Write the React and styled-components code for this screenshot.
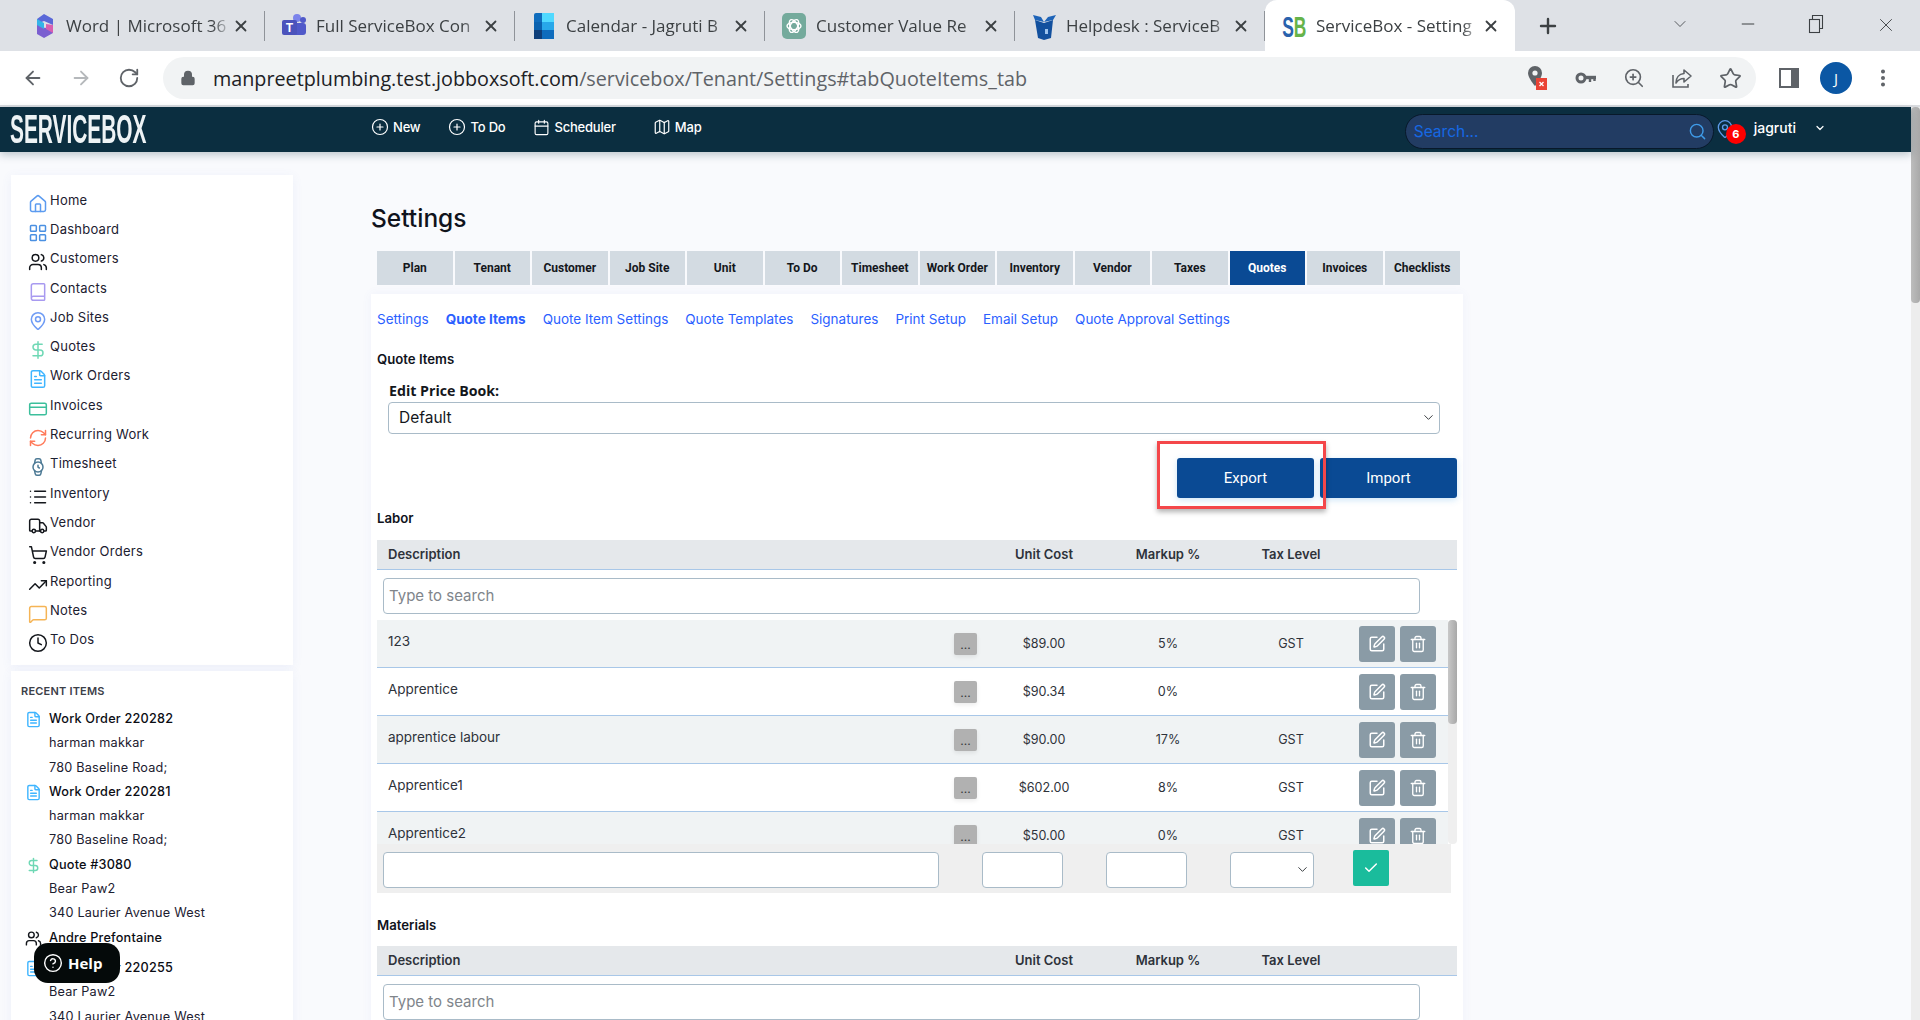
import React from 'react';
import styled, { createGlobalStyle } from 'styled-components';
import {
  ArrowLeft, ArrowRight, RotateCw, Lock, ZoomIn, Star, Plus, X, ChevronDown, Minus,
  CirclePlus, Calendar, Map as MapIcon, Search, MapPin, House, LayoutGrid, Users, Book, DollarSign,
  FileText, CreditCard, RefreshCw, Watch, List, Truck, ShoppingCart, TrendingUp, MessageSquare,
  Clock, SquarePen, Trash2, Check, CircleHelp, EllipsisVertical,
} from 'lucide-react';

const GlobalStyle = createGlobalStyle`
  html, body {
    margin: 0;
    padding: 0;
    overflow: hidden;
    background: #f9fafd;
  }
  * { box-sizing: border-box; }
`;

const APP_FONT = `Inter, 'Open Sans', sans-serif`;
const CHROME_FONT = `'Open Sans', 'Noto Sans', sans-serif`;
const TABLE_COLUMNS = '577px 23px 134px 114px 132px 1fr';

const Frame = styled.div`
  width: 1920px;
  height: 1020px;
  display: flex;
  flex-direction: column;
  overflow: hidden;
`;

/* browser chrome */
const TabStrip = styled.div`
  height: 51px;
  background: #dee1e6;
  display: flex;
  padding-left: 15px;
  font-family: ${CHROME_FONT};
`;

const BrowserTab = styled.div`
  width: 250px;
  height: 51px;
  display: flex;
  align-items: center;
  padding: 0 15px 0 16px;
  position: relative;
  color: #3c4043;
  background: ${(p) => (p.$active ? '#fff' : 'transparent')};
  border-radius: ${(p) => (p.$active ? '12px 12px 0 0' : '0')};
  &::after {
    content: '';
    display: ${(p) => (p.$sep ? 'block' : 'none')};
    position: absolute;
    right: 0;
    top: 11px;
    bottom: 10px;
    width: 1px;
    background: #8f9399;
  }
`;

const Favicon = styled.span`
  width: 26px;
  height: 26px;
  display: flex;
  align-items: center;
  justify-content: center;
  flex: none;
`;

const TabTitle = styled.span`
  flex: 1;
  margin-left: 9px;
  font-size: 17px;
  white-space: nowrap;
  overflow: hidden;
  -webkit-mask-image: linear-gradient(90deg, #000 88%, transparent 100%);
  mask-image: linear-gradient(90deg, #000 88%, transparent 100%);
`;

const WindowControls = styled.div`
  flex: 1;
  display: flex;
  align-items: center;
  color: #3c4043;
`;

const NewTabSlot = styled.span`
  margin-left: 21px;
  display: flex;
`;

const WindowButton = styled.span`
  display: flex;
  position: absolute;
  left: ${(p) => p.$x}px;
  top: 14px;
`;

const Toolbar = styled.div`
  height: 56px;
  background: #fff;
  border-bottom: 2px solid #dadce0;
  display: flex;
  align-items: center;
  padding-left: 22px;
  color: #5f6368;
  font-family: ${CHROME_FONT};
`;

const NavIcons = styled.div`
  display: flex;
  gap: 26px;
  width: 141px;
  flex: none;
`;

const Omnibox = styled.div`
  width: 1593px;
  height: 42px;
  border-radius: 21px;
  background: #f1f3f4;
  display: flex;
  align-items: center;
  padding-left: 17px;
`;

const UrlText = styled.div`
  margin-left: 17px;
  font-size: 19.75px;
  color: #5f6368;
  white-space: nowrap;
  flex: 1;
  b { font-weight: 400; color: #202124; }
`;

const OmniIcons = styled.div`
  display: flex;
  align-items: center;
  gap: 25px;
  padding-right: 14px;
`;

const ToolbarEnd = styled.div`
  display: flex;
  align-items: center;
  margin-left: 22px;
  gap: 20px;
`;

const Avatar = styled.div`
  width: 32px;
  height: 32px;
  border-radius: 50%;
  background: #0b57a4;
  color: #fff;
  font-size: 15px;
  display: flex;
  align-items: center;
  justify-content: center;
`;

/* page */
const PageArea = styled.div`
  flex: 1;
  display: flex;
  min-height: 0;
`;

const PageColumn = styled.div`
  flex: 1;
  min-width: 0;
  display: flex;
  flex-direction: column;
  background: #f9fafd;
  font-family: ${APP_FONT};
`;

const PageScrollbar = styled.div`
  width: 9px;
  background: #ededed;
  flex: none;
`;

const ScrollThumb = styled.div`
  height: ${(p) => p.$h}px;
  background: linear-gradient(90deg, #bdbdbd, #a9a9a9);
  border-radius: 4px;
`;

const AppHeader = styled.header`
  height: 45px;
  flex: none;
  background: #0b2e40;
  display: flex;
  align-items: center;
  color: #fff;
  box-shadow: 0 3px 8px rgba(11, 46, 64, 0.25);
  position: relative;
  z-index: 2;
  padding-right: 85px;
`;

const LogoBox = styled.div`
  width: 372px;
  padding-left: 10px;
  flex: none;
`;

const Logo = styled.div`
  display: inline-block;
  font-family: 'Liberation Sans', sans-serif;
  font-weight: 700;
  font-size: 40px;
  line-height: 45px;
  white-space: nowrap;
  color: #eef3f5;
  transform: scaleX(0.522);
  transform-origin: left center;
`;

const HeaderNav = styled.nav`
  display: flex;
  align-items: center;
  gap: 28px;
  margin-left: -1px;
`;

const HeaderLink = styled.a`
  display: flex;
  align-items: center;
  gap: 4px;
  font-size: 13px;
  font-weight: 500;
  letter-spacing: -0.2px;
  margin-left: ${(p) => p.$shift || 0}px;
  margin-top: -5px;
`;

const HeaderRight = styled.div`
  margin-left: auto;
  display: flex;
  align-items: center;
`;

const SearchPill = styled.div`
  width: 309px;
  height: 35px;
  margin-top: 3px;
  border-radius: 18px;
  border: 1px solid #08192a;
  background: #223c63;
  display: flex;
  align-items: center;
  justify-content: space-between;
  padding: 0 6px 0 8px;
  font-size: 15.5px;
  color: #1668e3;
`;

const PinBadge = styled.div`
  position: relative;
  width: 39px;
  height: 30px;
  margin-left: 1px;
  margin-top: -6px;
  color: #5d9be8;
  padding-top: 7px;
`;

const Badge = styled.span`
  position: absolute;
  left: 11px;
  top: 12px;
  width: 20px;
  height: 20px;
  border-radius: 50%;
  background: #f00;
  color: #fff;
  font-size: 11px;
  font-weight: 700;
  display: flex;
  align-items: center;
  justify-content: center;
`;

const UserName = styled.span`
  font-size: 14px;
  font-weight: 500;
  margin-right: 18px;
  margin-top: -5px;
`;

const Body = styled.div`
  flex: 1;
  min-height: 0;
  display: flex;
  align-items: flex-start;
  position: relative;
`;

const Sidebar = styled.aside`
  width: 293px;
  flex: none;
  padding: 23px 0 0 11px;
  display: flex;
  flex-direction: column;
  gap: 6px;
`;

const SideCard = styled.div`
  width: 282px;
  background: #fff;
  box-shadow: 0 2px 10px rgba(90, 110, 200, 0.08);
`;

const NavList = styled(SideCard)`
  height: 490px;
  padding-top: 10px;
`;

const NavRow = styled.div`
  height: 29.3px;
  display: flex;
  align-items: center;
  padding-left: 17px;
  gap: 2px;
  font-size: 13px;
  letter-spacing: 0.25px;
  color: #1c2030;
`;

const NavIconBox = styled.span`
  width: 20px;
  height: 20px;
  margin-top: 8px;
  display: flex;
  justify-content: center;
  color: ${(p) => p.$color};
`;

const RecentCard = styled(SideCard)`
  padding: 12px 0 0 10px;
  height: 360px;
`;

const RecentHeading = styled.div`
  font-size: 11px;
  font-weight: 600;
  color: #3c4048;
  letter-spacing: 0.2px;
  line-height: 16px;
  margin-bottom: 8px;
`;

const RecentItem = styled.div`
  display: grid;
  grid-template-columns: 28px 1fr;
  margin-bottom: ${(p) => (p.$solo ? 6 : 0)}px;
  font-size: 12.7px;
  line-height: 24.3px;
  color: #1c2030;
  letter-spacing: 0.2px;
`;

const RecentIcon = styled.span`
  color: ${(p) => p.$color};
  display: flex;
  justify-content: center;
  padding: 4px 4px 0 0;
  height: 24px;
`;

const RecentTitle = styled.div`
  font-weight: 500;
  color: #0b0d14;
`;

const HelpButton = styled.button`
  position: absolute;
  left: 34px;
  top: 791px;
  width: 86px;
  height: 40px;
  border: none;
  border-radius: 14px;
  background: #050a0a;
  color: #fff;
  font-family: 'Open Sans', sans-serif;
  font-size: 15px;
  font-weight: 700;
  display: flex;
  align-items: center;
  padding-left: 9px;
  gap: 5px;
  z-index: 3;
`;

const Main = styled.main`
  width: 1092px;
  margin-left: 78px;
`;

const PageTitle = styled.h1`
  margin: 0;
  height: 99px;
  padding-top: 50px;
  font-size: 24.5px;
  line-height: 32px;
  font-weight: 500;
  color: #10131c;
`;

const TabsBar = styled.div`
  display: grid;
  grid-template-columns: repeat(14, 1fr);
  gap: 2px;
  margin-left: 6px;
  width: 1083px;
`;

const SettingsTab = styled.div`
  height: 34px;
  display: flex;
  align-items: center;
  justify-content: center;
  font-family: Roboto, sans-serif;
  font-size: 12px;
  font-weight: 700;
  white-space: nowrap;
  background: ${(p) => (p.$active ? '#0a4a94' : '#d3dbe2')};
  color: ${(p) => (p.$active ? '#fff' : '#14171c')};
`;

const ContentCard = styled.section`
  margin-top: 9px;
  background: #fff;
  padding: 0 6px;
  height: 740px;
  box-shadow: 0 0 10px rgba(90, 110, 200, 0.06);
`;

const SubNav = styled.div`
  height: 50px;
  display: flex;
  align-items: center;
  gap: 17px;
  font-size: 13.5px;
  color: #2b5fff;
`;

const SubLink = styled.a`
  font-weight: ${(p) => (p.$active ? 700 : 400)};
  white-space: nowrap;
`;

const SectionTitle = styled.div`
  font-size: 13.2px;
  font-weight: 600;
  line-height: 18px;
  color: #10131c;
  margin-top: ${(p) => p.$top}px;
`;

const FieldLabel = styled.div`
  margin: 14px 0 2px 12px;
  font-family: 'Open Sans', sans-serif;
  font-size: 14.2px;
  font-weight: 700;
  line-height: 18px;
  color: #14171c;
`;

const SelectBox = styled.div`
  width: ${(p) => p.$w}px;
  height: ${(p) => p.$h}px;
  margin-left: ${(p) => p.$left || 0}px;
  background: #fff;
  border: 1px solid #a9bbc8;
  border-radius: 4px;
  display: flex;
  align-items: center;
  justify-content: space-between;
  padding: 0 3px 2px 10px;
  font-size: 15.5px;
  color: #14171c;
  flex: none;
`;

const ButtonRow = styled.div`
  margin-top: 24px;
  display: flex;
  justify-content: flex-end;
  gap: 6px;
  position: relative;
`;

const PrimaryButton = styled.button`
  width: 137px;
  height: 40px;
  border: none;
  border-radius: 3px;
  background: #0a4a94;
  color: #fff;
  font-family: Roboto, sans-serif;
  font-size: 15px;
  font-weight: 400;
  box-shadow: 0 2px 6px rgba(90, 170, 230, 0.3);
`;

const Highlight = styled.div`
  position: absolute;
  right: 131px;
  top: -17px;
  width: 169px;
  height: 68px;
  border: 3px solid #f4474a;
  box-shadow: 0 3px 5px rgba(0, 0, 0, 0.3);
  pointer-events: none;
`;

const TableHead = styled.div`
  margin-top: ${(p) => p.$top}px;
  height: 30px;
  padding-bottom: 2px;
  background: #e5e8eb;
  border-bottom: 1px solid #a8c7e8;
  display: grid;
  grid-template-columns: ${TABLE_COLUMNS};
  align-items: center;
  font-size: 13px;
  font-weight: 600;
  color: #2e323a;
`;

const HeadCell = styled.div`
  text-align: ${(p) => (p.$left ? 'left' : 'center')};
  padding-left: ${(p) => (p.$left ? 11 : 0)}px;
`;

const TextField = styled.input`
  display: block;
  width: ${(p) => p.$w}px;
  height: 36px;
  flex: none;
  background: #fff;
  border: 1px solid #a9bbc8;
  border-radius: 4px;
  padding: 0 5px 2px;
  font-family: ${APP_FONT};
  font-size: 15px;
  outline: none;
  &::placeholder { color: #80858b; opacity: 1; }
`;

const SearchField = styled(TextField)`
  margin: 8px 0 6px 6px;
`;

const RowsViewport = styled.div`
  height: 224px;
  display: flex;
  overflow: hidden;
`;

const RowsList = styled.div`
  flex: 1;
  min-width: 0;
`;

const ItemRow = styled.div`
  height: 48px;
  display: grid;
  grid-template-columns: ${TABLE_COLUMNS};
  align-items: center;
  background: ${(p) => (p.$odd ? '#f0f3f4' : '#fff')};
  border-bottom: 1px solid #a8c7e8;
  font-size: 12.6px;
  color: #2e323a;
  text-align: center;
`;

const ItemName = styled.div`
  text-align: left;
  font-size: 13.5px;
  padding: 0 0 6px 11px;
`;

const MoreButton = styled.span`
  width: 23px;
  height: 22px;
  border-radius: 2px;
  background: #b1b1b1;
  color: #33373c;
  font-size: 12px;
  line-height: 24px;
  box-shadow: 0 2px 4px rgba(0, 0, 0, 0.08);
`;

const RowActions = styled.div`
  display: flex;
  gap: 5px;
  padding-left: 2px;
`;

const ActionButton = styled.span`
  width: 36px;
  height: 36px;
  border-radius: 3px;
  background: #8a9ba6;
  color: #fff;
  display: flex;
  align-items: center;
  justify-content: center;
`;

const RowsScrollbar = styled.div`
  width: 9px;
  flex: none;
  background: #efefef;
  border-radius: 4px;
`;

const RowsThumb = styled.div`
  height: 104px;
  background: linear-gradient(90deg, #c8c8c8, #a8a8a8);
  border-radius: 4px;
`;

const AddRow = styled.div`
  width: 1074px;
  height: 49px;
  background: #efefef;
  padding: 8px 0 0 6px;
  display: flex;
  align-items: flex-start;
  gap: 43px;
`;

const ConfirmButton = styled.span`
  width: 36px;
  height: 36px;
  margin: -2px 0 0 -4px;
  border-radius: 2px;
  background: #1abc9c;
  color: #fff;
  display: flex;
  align-items: center;
  justify-content: center;
`;

const navItems = [
  ['Home', House, '#5b9bf0'],
  ['Dashboard', LayoutGrid, '#4a90e2'],
  ['Customers', Users, '#14171c'],
  ['Contacts', Book, '#a89af0'],
  ['Job Sites', MapPin, '#6f9cf5'],
  ['Quotes', DollarSign, '#6fd8b5'],
  ['Work Orders', FileText, '#3fb5ff'],
  ['Invoices', CreditCard, '#3cbf9c'],
  ['Recurring Work', RefreshCw, '#ff7a5a'],
  ['Timesheet', Watch, '#4d7a95'],
  ['Inventory', List, '#14171c'],
  ['Vendor', Truck, '#14171c'],
  ['Vendor Orders', ShoppingCart, '#14171c'],
  ['Reporting', TrendingUp, '#14171c'],
  ['Notes', MessageSquare, '#f5b455'],
  ['To Dos', Clock, '#14171c'],
];

const recentItems = [
  ['Work Order 220282', FileText, '#3fb5ff', ['harman makkar', '780 Baseline Road;']],
  ['Work Order 220281', FileText, '#3fb5ff', ['harman makkar', '780 Baseline Road;']],
  ['Quote #3080', DollarSign, '#6fd8b5', ['Bear Paw2', '340 Laurier Avenue West']],
  ['Andre Prefontaine', Users, '#14171c', []],
  ['Work Order 220255', FileText, '#3fb5ff', ['Bear Paw2', '340 Laurier Avenue West']],
];

const settingsTabs = ['Plan', 'Tenant', 'Customer', 'Job Site', 'Unit', 'To Do', 'Timesheet', 'Work Order', 'Inventory', 'Vendor', 'Taxes', 'Quotes', 'Invoices', 'Checklists'];
const subLinks = ['Settings', 'Quote Items', 'Quote Item Settings', 'Quote Templates', 'Signatures', 'Print Setup', 'Email Setup', 'Quote Approval Settings'];

const laborRows = [
  ['123', '$89.00', '5%', 'GST'],
  ['Apprentice', '$90.34', '0%', ''],
  ['apprentice labour', '$90.00', '17%', 'GST'],
  ['Apprentice1', '$602.00', '8%', 'GST'],
  ['Apprentice2', '$50.00', '0%', 'GST'],
];

const WordIcon = () => (
  <svg width="24" height="26" viewBox="0 0 24 26">
    <path d="M12 1 21 6v6l-9-4-7 3V6z" fill="#5a68d8" />
    <path d="M5 11l8 4 8-3v8l-9 5-7-4z" fill="#7b5fd0" />
    <path d="M5 6l7 4v6l-7-4z" fill="#33b4e8" />
    <path d="M21 12v8l-7-4v-5z" fill="#d85fb0" />
  </svg>
);

const TeamsIcon = () => (
  <svg width="26" height="26" viewBox="0 0 26 26">
    <circle cx="16" cy="5" r="4" fill="#7b83eb" />
    <circle cx="22" cy="7" r="3" fill="#5059c9" />
    <rect x="12" y="10" width="13" height="12" rx="3" fill="#5059c9" />
    <rect x="1" y="7" width="15" height="15" rx="2" fill="#4b53bc" />
    <text x="8.5" y="19" textAnchor="middle" fontFamily="Roboto" fontWeight="700" fontSize="12" fill="#fff">T</text>
  </svg>
);

const CalendarIcon = () => (
  <svg width="20" height="26" viewBox="0 0 20 26">
    <rect width="20" height="26" rx="2" fill="#0f6cbd" />
    <rect width="8" height="9" fill="#0f3f7a" y="17" />
    <rect x="8" y="9" width="12" height="8" fill="#28a8ea" />
    <rect y="9" width="8" height="8" fill="#0a62b0" />
    <rect x="8" y="17" width="12" height="9" fill="#0f6cbd" />
    <rect x="8" width="12" height="9" fill="#50d9ff" />
  </svg>
);

const GptIcon = () => (
  <svg width="24" height="26" viewBox="0 0 24 26">
    <rect width="24" height="26" rx="5" fill="#74aa9c" />
    <g fill="none" stroke="#fff" strokeWidth="1.4">
      <ellipse cx="12" cy="13" rx="7" ry="3.6" />
      <ellipse cx="12" cy="13" rx="7" ry="3.6" transform="rotate(60 12 13)" />
      <ellipse cx="12" cy="13" rx="7" ry="3.6" transform="rotate(120 12 13)" />
    </g>
  </svg>
);

const BoxIcon = () => (
  <svg width="25" height="28" viewBox="0 0 25 28">
    <path d="M3 8l9 3 9-3-2 18-7 2-6-2z" fill="#12509e" />
    <path d="M1 3l8 2 3 5-9-2zM24 3l-8 2-4 5 9-2z" fill="#1d63b8" />
    <rect x="13" y="17" width="3" height="5" fill="#9cc3ee" />
  </svg>
);

const SbIcon = () => (
  <svg width="26" height="28" viewBox="0 0 26 28">
    <text transform="scale(0.58 1)" x="2" y="25" fontFamily="Liberation Sans" fontWeight="700" fontSize="30">
      <tspan fill="#2a62ad">S</tspan>
      <tspan fill="#66b34a">B</tspan>
    </text>
  </svg>
);

const PinBlocked = () => (
  <svg width="24" height="28" viewBox="0 0 24 28">
    <path d="M10 2a7 7 0 0 0-7 7c0 5 7 13 7 13s7-8 7-13a7 7 0 0 0-7-7z" fill="#5f6368" />
    <circle cx="10" cy="9" r="2.6" fill="#f1f3f4" />
    <rect x="11" y="14" width="11" height="12" fill="#ea4335" />
    <path d="M14.500 18l4 4m0-4l-4 4" stroke="#fff" strokeWidth="1.3" />
  </svg>
);

const KeyIcon = () => (
  <svg width="24" height="24" viewBox="0 0 24 24" fill="none" stroke="#5f6368">
    <circle cx="7" cy="12" r="4" strokeWidth="3" />
    <path d="M11 11.500h11" strokeWidth="3.400" />
    <path d="M16 12v4M20.500 12v3" strokeWidth="2.400" />
  </svg>
);

const ShareIcon = () => (
  <svg width="24" height="24" viewBox="0 0 24 24" fill="none" stroke="#5f6368" strokeWidth="1.6">
    <path d="M3 9v12h15v-3" />
    <path d="M14 4l7 6-7 6v-3.500c-4 0-6 1.500-8 4.500 0-5 3-9 8-9.500z" strokeLinejoin="round" />
  </svg>
);

const SidePanelIcon = () => (
  <svg width="22" height="24" viewBox="0 0 22 24" fill="none">
    <rect x="2" y="3" width="18" height="18" stroke="#5f6368" strokeWidth="2" />
    <rect x="13" y="3" width="7" height="18" fill="#5f6368" />
  </svg>
);

const RestoreIcon = () => (
  <svg width="20" height="20" viewBox="0 0 20 20" fill="none" stroke="#3c4043" strokeWidth="1.100">
    <rect x="3.500" y="5.500" width="10" height="13" />
    <path d="M6.500 5.500V1.500h10v13h-3" />
  </svg>
);

const browserTabs = [
  ['Word | Microsoft 36', <WordIcon />],
  ['Full ServiceBox Con', <TeamsIcon />],
  ['Calendar - Jagruti B', <CalendarIcon />],
  ['Customer Value Re', <GptIcon />],
  ['Helpdesk : ServiceB', <BoxIcon />],
];

const ItemsTable = ({ top }) => (
  <TableHead $top={top}>
    <HeadCell $left>Description</HeadCell>
    <span />
    <HeadCell>Unit Cost</HeadCell>
    <HeadCell>Markup %</HeadCell>
    <HeadCell>Tax Level</HeadCell>
    <span />
  </TableHead>
);

const App = () => (
  <Frame>
    <GlobalStyle />
    <TabStrip>
      {browserTabs.map(([title, icon]) => (
        <BrowserTab key={title} $sep>
          <Favicon>{icon}</Favicon>
          <TabTitle>{title}</TabTitle>
          <X size={18} strokeWidth={2.4} color="#3c4043" />
        </BrowserTab>
      ))}
      <BrowserTab $active>
        <Favicon><SbIcon /></Favicon>
        <TabTitle>ServiceBox - Setting</TabTitle>
        <X size={18} strokeWidth={2.4} color="#3c4043" />
      </BrowserTab>
      <WindowControls>
        <NewTabSlot><Plus size={24} strokeWidth={2.4} /></NewTabSlot>
        <WindowButton $x={1670}><ChevronDown size={20} strokeWidth={1} /></WindowButton>
        <WindowButton $x={1738}><Minus size={20} strokeWidth={1.2} /></WindowButton>
        <WindowButton $x={1806}><RestoreIcon /></WindowButton>
        <WindowButton $x={1875}><X size={22} strokeWidth={1} /></WindowButton>
      </WindowControls>
    </TabStrip>
    <Toolbar>
      <NavIcons>
        <ArrowLeft size={22} strokeWidth={2} />
        <ArrowRight size={22} strokeWidth={2} color="#b5b8bb" />
        <RotateCw size={22} strokeWidth={2} />
      </NavIcons>
      <Omnibox>
        <Lock size={16} fill="#5f6368" />
        <UrlText><b>manpreetplumbing.test.jobboxsoft.com</b>/servicebox/Tenant/Settings#tabQuoteItems_tab</UrlText>
        <OmniIcons>
          <PinBlocked />
          <KeyIcon />
          <ZoomIn size={22} strokeWidth={1.8} />
          <ShareIcon />
          <Star size={23} strokeWidth={1.8} />
        </OmniIcons>
      </Omnibox>
      <ToolbarEnd>
        <SidePanelIcon />
        <Avatar>J</Avatar>
        <EllipsisVertical size={22} strokeWidth={2.4} />
      </ToolbarEnd>
    </Toolbar>
    <PageArea>
      <PageColumn>
        <AppHeader>
          <LogoBox><Logo>SERVICEBOX</Logo></LogoBox>
          <HeaderNav>
            <HeaderLink><CirclePlus size={18} strokeWidth={1.6} />New</HeaderLink>
            <HeaderLink><CirclePlus size={18} strokeWidth={1.6} />To Do</HeaderLink>
            <HeaderLink><Calendar size={17} strokeWidth={1.6} />Scheduler</HeaderLink>
            <HeaderLink $shift={9}><MapIcon size={18} strokeWidth={1.6} />Map</HeaderLink>
          </HeaderNav>
          <HeaderRight>
            <SearchPill>
              Search...
              <Search size={19} strokeWidth={1.8} color="#3f9be8" />
            </SearchPill>
            <PinBadge>
              <MapPin size={20} strokeWidth={1.6} />
              <Badge>6</Badge>
            </PinBadge>
            <UserName>jagruti</UserName>
            <ChevronDown size={12} strokeWidth={2.4} style={{ marginTop: -4 }} />
          </HeaderRight>
        </AppHeader>
        <Body>
          <Sidebar>
            <NavList>
              {navItems.map(([label, Icon, color]) => (
                <NavRow key={label}>
                  <NavIconBox $color={color}><Icon size={20} strokeWidth={1.8} /></NavIconBox>
                  {label}
                </NavRow>
              ))}
            </NavList>
            <RecentCard>
              <RecentHeading>RECENT ITEMS</RecentHeading>
              {recentItems.map(([title, Icon, color, lines]) => (
                <RecentItem key={title} $solo={!lines.length}>
                  <RecentIcon $color={color}><Icon size={17} strokeWidth={2} /></RecentIcon>
                  <div>
                    <RecentTitle>{title}</RecentTitle>
                    {lines.map((line) => <div key={line}>{line}</div>)}
                  </div>
                </RecentItem>
              ))}
            </RecentCard>
          </Sidebar>
          <HelpButton><CircleHelp size={20} strokeWidth={1.7} />Help</HelpButton>
          <Main>
            <PageTitle>Settings</PageTitle>
            <TabsBar>
              {settingsTabs.map((tab) => (
                <SettingsTab key={tab} $active={tab === 'Quotes'}>{tab}</SettingsTab>
              ))}
            </TabsBar>
            <ContentCard>
              <SubNav>
                {subLinks.map((link) => (
                  <SubLink key={link} $active={link === 'Quote Items'}>{link}</SubLink>
                ))}
              </SubNav>
              <SectionTitle $top={6}>Quote Items</SectionTitle>
              <FieldLabel>Edit Price Book:</FieldLabel>
              <SelectBox $w={1052} $h={32} $left={11}>
                Default
                <ChevronDown size={15} strokeWidth={1.6} color="#3c4043" />
              </SelectBox>
              <ButtonRow>
                <PrimaryButton>Export</PrimaryButton>
                <PrimaryButton>Import</PrimaryButton>
                <Highlight />
              </ButtonRow>
              <SectionTitle $top={11}>Labor</SectionTitle>
              <ItemsTable top={13} />
              <SearchField $w={1037} placeholder="Type to search" />
              <RowsViewport>
                <RowsList>
                  {laborRows.map(([name, cost, markup, tax], i) => (
                    <ItemRow key={name} $odd={i % 2 === 0}>
                      <ItemName>{name}</ItemName>
                      <MoreButton>...</MoreButton>
                      <div>{cost}</div>
                      <div>{markup}</div>
                      <div>{tax}</div>
                      <RowActions>
                        <ActionButton><SquarePen size={18} strokeWidth={2} /></ActionButton>
                        <ActionButton><Trash2 size={18} strokeWidth={1.8} /></ActionButton>
                      </RowActions>
                    </ItemRow>
                  ))}
                </RowsList>
                <RowsScrollbar><RowsThumb /></RowsScrollbar>
              </RowsViewport>
              <AddRow>
                <TextField $w={556} />
                <TextField $w={81} />
                <TextField $w={81} />
                <SelectBox $w={84} $h={36}>
                  <span />
                  <ChevronDown size={15} strokeWidth={1.6} color="#3c4043" />
                </SelectBox>
                <ConfirmButton><Check size={16} strokeWidth={2.2} /></ConfirmButton>
              </AddRow>
              <SectionTitle $top={23}>Materials</SectionTitle>
              <ItemsTable top={12} />
              <SearchField $w={1037} placeholder="Type to search" />
            </ContentCard>
          </Main>
        </Body>
      </PageColumn>
      <PageScrollbar><ScrollThumb $h={196} /></PageScrollbar>
    </PageArea>
  </Frame>
);

export default App;
